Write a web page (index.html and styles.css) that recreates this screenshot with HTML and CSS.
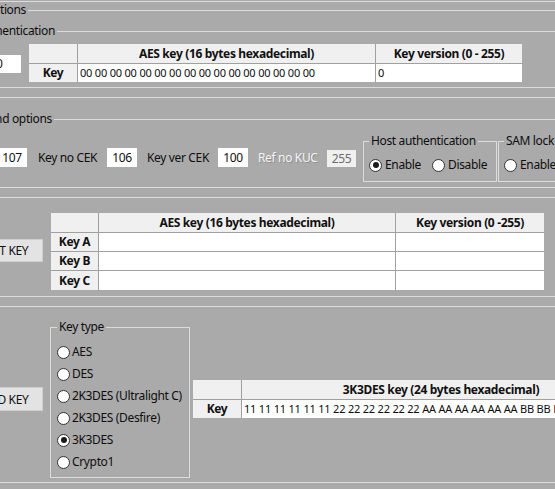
FILE: index.html
```html
<!DOCTYPE html>
<html lang="en">
<head>
<meta charset="utf-8">
<title>SAM options</title>
<link rel="stylesheet" href="styles.css">
</head>
<body>
<div class="page">
  <div class="rule r-top"></div>

  <div class="title-row t-options"><span class="title-clip w26"><span>Options</span></span><span class="line"></span></div>
  <div class="title-row t-auth"><span class="title-clip w55"><span>Authentication</span></span><span class="line"></span></div>

  <div class="sec sec1">
    <div class="tb tb-auth">0</div>
    <div class="grid g1">
      <div class="hd"></div>
      <div class="hd">AES key (16 bytes hexadecimal)</div>
      <div class="hd">Key version (0 - 255)</div>
      <div class="rh">Key</div>
      <div class="cell">00 00 00 00 00 00 00 00 00 00 00 00 00 00 00 00</div>
      <div class="cell">0</div>
    </div>
  </div>

  <div class="rule r-a"></div>
  <div class="rule r-b"></div>

  <div class="title-row t-cmd"><span class="title-clip w52"><span>Command options</span></span><span class="line"></span></div>

  <div class="sec sec2">
    <div class="fields">
      <div class="tb tb-first">107</div>
      <span class="lbl lbl-kno">Key no CEK</span>
      <div class="tb">106</div>
      <span class="lbl lbl-kver">Key ver CEK</span>
      <div class="tb">100</div>
      <span class="lbl lbl-ref dis">Ref no KUC</span>
      <div class="tb tb-dis">255</div>
    </div>
    <fieldset class="grp host">
      <legend>Host authentication</legend>
      <div class="opts">
        <span class="opt opt-en"><span class="rb on"></span>Enable</span>
        <span class="opt opt-dis"><span class="rb"></span>Disable</span>
      </div>
    </fieldset>
    <fieldset class="grp sam">
      <legend>SAM lock</legend>
      <div class="opts">
        <span class="opt"><span class="rb"></span>Enable</span>
        <span class="opt opt-dis"><span class="rb on"></span>Disable</span>
      </div>
    </fieldset>
  </div>

  <div class="rule r-c"></div>
  <div class="rule r-d"></div>

  <div class="sec sec3">
    <button class="btn btn-set">SET KEY</button>
    <div class="grid g3">
      <div class="hd"></div>
      <div class="hd">AES key (16 bytes hexadecimal)</div>
      <div class="hd">Key version (0 -255)</div>
      <div class="rh">Key A</div>
      <div class="cell"></div>
      <div class="cell"></div>
      <div class="rh">Key B</div>
      <div class="cell"></div>
      <div class="cell"></div>
      <div class="rh">Key C</div>
      <div class="cell"></div>
      <div class="cell"></div>
    </div>
  </div>

  <div class="rule r-e"></div>
  <div class="rule r-f"></div>

  <div class="sec sec4">
    <button class="btn btn-load">LOAD KEY</button>
    <fieldset class="grp ktype">
      <legend>Key type</legend>
      <div class="ko"><span class="rb"></span>AES</div>
      <div class="ko"><span class="rb"></span>DES</div>
      <div class="ko"><span class="rb"></span>2K3DES (Ultralight C)</div>
      <div class="ko"><span class="rb"></span>2K3DES (Desfire)</div>
      <div class="ko"><span class="rb on"></span>3K3DES</div>
      <div class="ko"><span class="rb"></span>Crypto1</div>
    </fieldset>
    <div class="grid g4">
      <div class="hd"></div>
      <div class="hd">3K3DES key (24 bytes hexadecimal)</div>
      <div class="hd">Key version (0 - 255)</div>
      <div class="rh">Key</div>
      <div class="cell">11 11 11 11 11 11 22 22 22 22 22 22 AA AA AA AA AA AA BB BB BB BB BB BB</div>
      <div class="cell">0</div>
    </div>
  </div>

  <div class="rule r-g"></div>
</div>
</body>
</html>
```

FILE: styles.css
```css
* { box-sizing: border-box; }

html, body {
  margin: 0;
  padding: 0;
}

body {
  width: 555px;
  height: 489px;
  overflow: hidden;
  background: #aaaaaa;
  font-family: "Noto Sans", "DejaVu Sans", sans-serif;
  font-size: 12px;
  letter-spacing: -0.35px;
  line-height: 14px;
  color: #0e0e0e;
}

.page {
  display: flex;
  flex-direction: column;
  width: 555px;
  height: 489px;
}

/* horizontal group lines */
.rule {
  flex: none;
  height: 1px;
  background: #dcdcdc;
}
.r-top { margin-top: 1px; }
.r-a { margin-top: 5px; }
.r-b { margin-top: 9px; }
.r-c { margin-top: 5px; }
.r-d { margin-top: 9px; }
.r-e { margin-top: 6px; }
.r-f { margin-top: 9px; }
.r-g { margin-top: 4px; }

/* group titles, cut by the left window edge */
.title-row {
  flex: none;
  display: flex;
  align-items: center;
  height: 14px;
}
.title-clip {
  flex: none;
  display: flex;
  justify-content: flex-end;
  white-space: nowrap;
}
.title-row .line {
  flex: 1;
  height: 1px;
  background: #dcdcdc;
  margin-left: 2px;
}
.w26 { width: 26px; }
.w55 { width: 55px; }
.w52 { width: 52px; }
.t-options { margin-top: 1px; }
.t-auth { margin-top: 7px; }
.t-cmd { margin-top: 14px; }

.sec {
  flex: none;
  display: flex;
  align-items: flex-start;
}
.sec1 { margin-top: 6px; }
.sec2 { margin-top: 8px; }
.sec3 { margin-top: 15px; }
.sec4 { margin-top: 13px; }

/* text boxes */
.tb {
  flex: none;
  width: 30px;
  height: 19px;
  background: #ffffff;
  display: flex;
  align-items: center;
  justify-content: center;
  color: #111;
}
.tb-auth {
  width: 28px;
  height: 18px;
  margin-left: -7px;
  margin-top: 11px;
  justify-content: flex-start;
  padding-left: 3px;
}
.tb-first { margin-left: -3px; }
.tb-dis {
  width: 29px;
  height: 17px;
  align-self: flex-end;
  background: #f0f0f0;
  color: #6d6d6d;
}

/* grids (data grid views) */
.grid {
  flex: none;
  display: grid;
  gap: 1px;
  background: #a0a0a0;
}
.grid > div {
  display: flex;
  align-items: center;
  overflow: hidden;
  white-space: nowrap;
}
.hd, .rh {
  background: #f0f0f0;
  font-weight: bold;
  justify-content: center;
  color: #111;
}
.cell {
  background: #ffffff;
  font-size: 11px;
  letter-spacing: -0.2px;
  padding-left: 2px;
}
.g1 {
  margin-left: 8px;
  grid-template-columns: 48px 297px 146px;
  grid-template-rows: 19px 18px;
}
.g3 {
  margin-left: 8px;
  grid-template-columns: 47px 296px 148px;
  grid-template-rows: 19px 18px 18px 19px;
}
.g4 {
  margin-left: 3px;
  margin-top: 60px;
  grid-template-columns: 48px 398px 150px;
  grid-template-rows: 19px 18px;
}

/* command option fields */
.fields {
  flex: none;
  display: flex;
  align-items: center;
  gap: 10px;
  height: 19px;
  margin-top: 14px;
}
.lbl {
  flex: none;
  white-space: nowrap;
}
.lbl-kno { width: 59px; margin-left: 1px; }
.lbl-kver { width: 61px; }
.lbl-ref { width: 59px; }
.dis {
  color: #f4f4f4;
  text-shadow: 1px 1px 0 rgba(120, 120, 120, 0.55);
}

/* group boxes */
.grp {
  flex: none;
  min-width: 0;
  margin: 0;
  border: 1px solid #dcdcdc;
  padding: 0 5px;
}
.grp legend {
  padding: 0 2px;
  line-height: 14px;
  white-space: nowrap;
}
.host {
  width: 134px;
  margin-left: 7px;
  padding-top: 8px;
  padding-bottom: 7px;
}
.sam {
  width: 130px;
  margin-left: 1px;
  padding-top: 8px;
  padding-bottom: 7px;
}
.opts {
  display: flex;
  align-items: center;
  height: 18px;
  white-space: nowrap;
}
.opt {
  display: flex;
  align-items: center;
  flex: none;
}
.opt-en { width: 63px; }

.ktype {
  width: 140px;
  margin-left: 7px;
  padding: 7px 5px 4px 6px;
}
.ko {
  display: flex;
  align-items: center;
  height: 22px;
  white-space: nowrap;
}

/* radio buttons */
.rb {
  flex: none;
  width: 13px;
  height: 13px;
  border: 1px solid #333333;
  border-radius: 50%;
  background: #ffffff;
  margin-right: 3px;
  display: flex;
  align-items: center;
  justify-content: center;
}
.rb.on::after {
  content: "";
  width: 6px;
  height: 6px;
  border-radius: 50%;
  background: #1a1a1a;
}
.ktype .rb { margin-right: 2px; }

/* buttons */
.btn {
  flex: none;
  height: 24px;
  padding: 0;
  margin: 0;
  background: #e3e3e3;
  border: 1px solid #cfcfcf;
  font-family: inherit;
  font-size: 12px;
  letter-spacing: -0.35px;
  color: #111;
  display: flex;
  align-items: center;
  justify-content: center;
  white-space: nowrap;
}
.btn-set {
  width: 71px;
  margin-left: -28px;
  margin-top: 26px;
  height: 23px;
}
.btn-load {
  width: 82px;
  margin-left: -39px;
  margin-top: 67px;
}
```
